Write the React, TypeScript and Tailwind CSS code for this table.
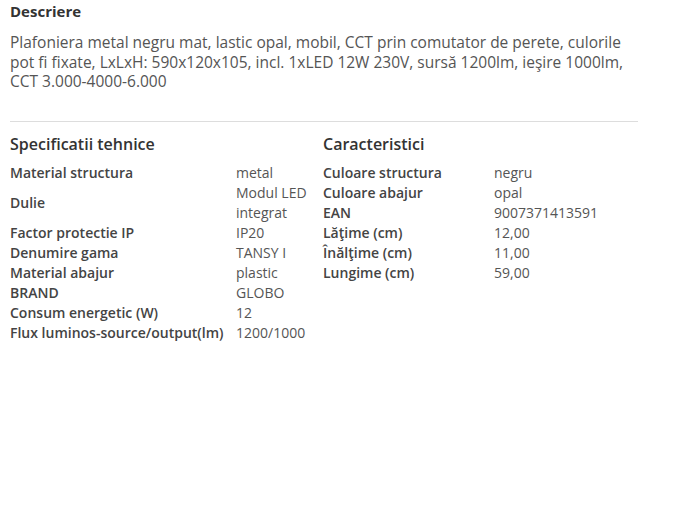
const LEFT: [string, string][] = [
  ["Material structura", "metal"],
  ["Dulie", "Modul LED integrat"],
  ["Factor protectie IP", "IP20"],
  ["Denumire gama", "TANSY I"],
  ["Material abajur", "plastic"],
  ["BRAND", "GLOBO"],
  ["Consum energetic (W)", "12"],
  ["Flux luminos-source/output(lm)", "1200/1000"],
];

const RIGHT: [string, string][] = [
  ["Culoare structura", "negru"],
  ["Culoare abajur", "opal"],
  ["EAN", "9007371413591"],
  ["Lăţime (cm)", "12,00"],
  ["Înălţime (cm)", "11,00"],
  ["Lungime (cm)", "59,00"],
];

function SpecTable({
  title,
  rows,
  labelW,
  valueW,
}: {
  title: string;
  rows: [string, string][];
  labelW: string;
  valueW: string;
}) {
  return (
    <div className="w-[313px]">
      <h3 className="text-[16px] font-semibold leading-[20px] text-[#333]">{title}</h3>
      <table className="mt-[9px] text-[14px] leading-[20px]">
        <tbody>
          {rows.map(([k, v]) => (
            <tr key={k}>
              <td className={`${labelW} align-middle font-semibold text-[#444]`}>{k}</td>
              <td className={`${valueW} align-middle text-[#555]`}>{v}</td>
            </tr>
          ))}
        </tbody>
      </table>
    </div>
  );
}

export default function App() {
  return (
    <div className="min-h-[531px] bg-white px-[10px] font-['Open_Sans',sans-serif]">
      <h2 className="pt-[1px] text-[15px] font-bold leading-[20px] text-[#333]">Descriere</h2>
      <p className="mt-[12px] w-[628px] text-[15.5px] leading-[19.5px] text-[#555]">
        Plafoniera metal negru mat, lastic opal, mobil, CCT prin comutator de perete, culorile pot fi
        fixate, LxLxH: 590x120x105, incl. 1xLED 12W 230V, sursă 1200lm, ieşire 1000lm, CCT
        3.000-4000-6.000
      </p>
      <div className="mt-[29px] w-[628px] border-t border-[#ddd]" />
      <div className="mt-[12px] flex">
        <SpecTable title="Specificatii tehnice" rows={LEFT} labelW="w-[226px]" valueW="w-[77px]" />
        <SpecTable title="Caracteristici" rows={RIGHT} labelW="w-[171px]" valueW="w-[130px]" />
      </div>
    </div>
  );
}
